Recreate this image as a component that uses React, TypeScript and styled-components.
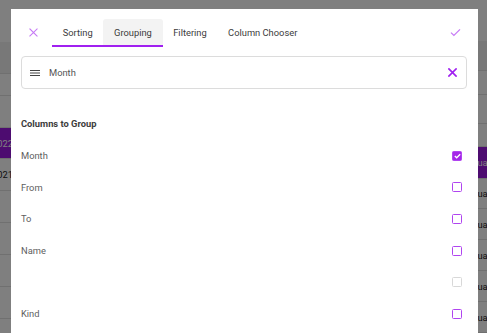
import styled, { createGlobalStyle } from 'styled-components'

const PURPLE = '#a020f0'

const GlobalStyle = createGlobalStyle`
  html, body {
    margin: 0;
    padding: 0;
    width: 100%;
    height: 100%;
    overflow: hidden;
    font-family: Roboto, "Liberation Sans", sans-serif;
  }
`

const Page = styled.div`
  width: 487px;
  height: 333px;
  display: flex;
  justify-content: space-between;
  background: #ffffff;
  overflow: hidden;
`

const BackColumn = styled.div<{ $w: number }>`
  width: ${(p) => p.$w}px;
  display: flex;
  flex-direction: column;
`

const BackToolbar = styled.div`
  height: 42px;
  width: 100%;
`

const BackHeader = styled.div`
  height: 31px;
  width: 100%;
  background: #f0f0f0;
  border-bottom: 1px solid #e0e0e0;
`

const BackRow = styled.div<{ $h: number; $selected?: boolean; $align: 'left' | 'right' }>`
  height: ${(p) => p.$h}px;
  width: 100%;
  box-sizing: border-box;
  border-bottom: 1px solid #e0e0e0;
  background: ${(p) => (p.$selected ? '#9a18e0' : '#ffffff')};
  color: ${(p) => (p.$selected ? '#ffffff' : '#222')};
  font-size: 9.33px;
  display: flex;
  align-items: center;
  justify-content: ${(p) => (p.$align === 'left' ? 'flex-end' : 'flex-start')};
  white-space: nowrap;
  overflow: hidden;
`

const Overlay = styled.div`
  position: fixed;
  inset: 0;
  background: rgba(0, 0, 0, 0.5);
`

const Modal = styled.div`
  position: fixed;
  left: 11px;
  top: 9px;
  width: 467px;
  bottom: -40px;
  background: #ffffff;
  box-sizing: border-box;
  padding: 10px 11px 0 10px;
  display: flex;
  flex-direction: column;
`

const Header = styled.div`
  display: flex;
  align-items: center;
  height: 27px;
`

const IconButton = styled.button<{ $faded?: boolean }>`
  width: 24px;
  height: 24px;
  padding: 0;
  border: none;
  background: transparent;
  display: flex;
  align-items: center;
  justify-content: center;
  opacity: ${(p) => (p.$faded ? 0.6 : 1)};
  cursor: pointer;
`

const Tabs = styled.div`
  position: relative;
  display: flex;
  margin-left: 7px;
  height: 27px;
  flex: 1;
`

const Tab = styled.div<{ $active?: boolean }>`
  height: 27px;
  padding: 0 10.7px;
  display: flex;
  align-items: center;
  font-size: 9.33px;
  color: #3c3c3c;
  background: ${(p) => (p.$active ? '#f3f3f3' : 'transparent')};
  border-top-left-radius: 3px;
  border-top-right-radius: 3px;
  white-space: nowrap;
`

const Indicator = styled.div`
  position: absolute;
  left: 0;
  bottom: -1px;
  width: 111px;
  height: 2px;
  background: ${PURPLE};
`

const GroupPanel = styled.div`
  margin-top: 10px;
  height: 33px;
  box-sizing: border-box;
  border: 1px solid #dcdcdc;
  border-radius: 4px;
  display: flex;
  align-items: center;
  padding: 0 9px 0 8px;
`

const Chip = styled.div`
  display: flex;
  align-items: center;
  gap: 9px;
  flex: 1;
  font-size: 9.33px;
  color: #555;
`

const SectionTitle = styled.div`
  margin-top: 29px;
  font-size: 9.33px;
  font-weight: 700;
  color: #3c3c3c;
  line-height: 12px;
`

const List = styled.div`
  margin-top: 10px;
  display: flex;
  flex-direction: column;
`

const Item = styled.div`
  height: 31.6px;
  display: flex;
  align-items: center;
  justify-content: space-between;
  font-size: 9.33px;
  color: #5e5e5e;
  padding-right: 5px;
`

const Box = styled.span<{ $checked?: boolean; $disabled?: boolean }>`
  width: 10px;
  height: 10px;
  box-sizing: border-box;
  border-radius: 1.5px;
  border: 1.4px solid ${(p) => (p.$disabled ? '#d8d8d8' : '#b044f0')};
  background: ${(p) => (p.$checked ? '#a526e8' : '#fff')};
  display: flex;
  align-items: center;
  justify-content: center;
`

const leftRows = [
  { h: 22, text: '' },
  { h: 32, text: '' },
  { h: 31, text: '2022', selected: true },
  { h: 32, text: '2021' },
  { h: 32, text: '' },
  { h: 32, text: '' },
  { h: 32, text: '' },
  { h: 32, text: '' },
]

const rightRows = [
  { h: 24, text: '' },
  { h: 31, text: '' },
  { h: 23, text: '' },
  { h: 33, text: 'Quarterly', selected: true },
  { h: 32, text: 'Quarterly' },
  { h: 32, text: 'Quarterly' },
  { h: 32, text: 'Quarterly' },
  { h: 32, text: 'Quarterly' },
  { h: 32, text: 'Quarterly' },
]

const columns = [
  { name: 'Month', checked: true },
  { name: 'From' },
  { name: 'To' },
  { name: 'Name' },
  { name: '', disabled: true },
  { name: 'Kind' },
]

const CloseIcon = ({ size, width, color }: { size: number; width: number; color: string }) => (
  <svg width={size} height={size} viewBox="0 0 10 10">
    <path d="M1 1 L9 9 M9 1 L1 9" stroke={color} strokeWidth={width} strokeLinecap="square" />
  </svg>
)

export default function App() {
  return (
    <>
      <GlobalStyle />
      <Page>
        <BackColumn $w={13}>
          <BackToolbar />
          <BackHeader />
          {leftRows.map((r, i) => (
            <BackRow key={i} $h={r.h} $selected={r.selected} $align="left">
              {r.text}
            </BackRow>
          ))}
        </BackColumn>
        <BackColumn $w={16}>
          <BackToolbar />
          <BackHeader />
          {rightRows.map((r, i) => (
            <BackRow key={i} $h={r.h} $selected={r.selected} $align="right">
              {r.text}
            </BackRow>
          ))}
        </BackColumn>
      </Page>
      <Overlay />
      <Modal>
        <Header>
          <IconButton $faded aria-label="Close">
            <CloseIcon size={9} width={1.2} color={PURPLE} />
          </IconButton>
          <Tabs>
            <Tab>Sorting</Tab>
            <Tab $active>Grouping</Tab>
            <Tab>Filtering</Tab>
            <Tab>Column Chooser</Tab>
            <Indicator />
          </Tabs>
          <IconButton $faded aria-label="Apply">
            <svg width="11" height="9" viewBox="0 0 11 9">
              <path d="M1 4.6 L3.9 7.5 L10 1.4" stroke={PURPLE} strokeWidth="1.2" fill="none" />
            </svg>
          </IconButton>
        </Header>
        <GroupPanel>
          <Chip>
            <svg width="10" height="8" viewBox="0 0 10 8">
              <path d="M0 1.5 H10 M0 4 H10 M0 6.5 H10" stroke="#444" strokeWidth="1.1" />
            </svg>
            Month
          </Chip>
          <CloseIcon size={9} width={1.8} color={PURPLE} />
        </GroupPanel>
        <SectionTitle>Columns to Group</SectionTitle>
        <List>
          {columns.map((c, i) => (
            <Item key={i}>
              <span>{c.name}</span>
              <Box $checked={c.checked} $disabled={c.disabled}>
                {c.checked && (
                  <svg width="7" height="6" viewBox="0 0 7 6">
                    <path d="M0.8 3 L2.7 4.8 L6.2 1.2" stroke="#fff" strokeWidth="1.3" fill="none" />
                  </svg>
                )}
              </Box>
            </Item>
          ))}
        </List>
      </Modal>
    </>
  )
}
